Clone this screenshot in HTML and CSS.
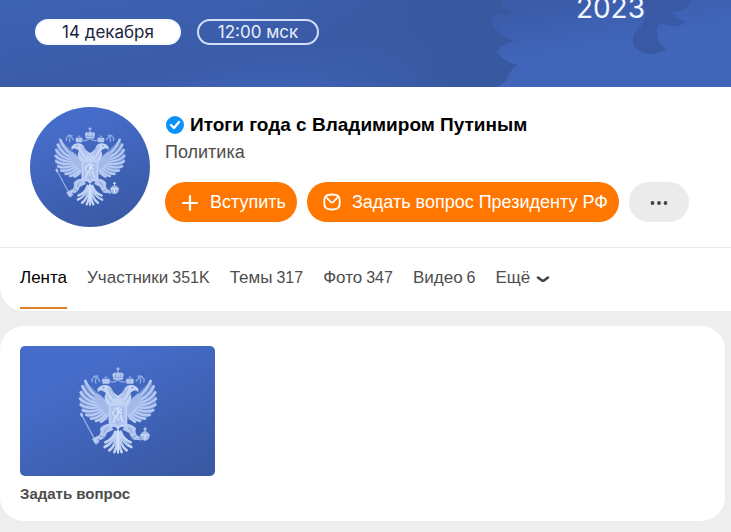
FILE: index.html
```html
<!DOCTYPE html>
<html lang="ru">
<head>
  <meta charset="UTF-8">
  <meta name="viewport" content="width=device-width, initial-scale=1.0">
  <title>Итоги года с Владимиром Путиным</title>
  <link rel="stylesheet" href="styles.css">
</head>
<body>

  <!-- Герб, используется в аватаре и в карточке -->
  <svg class="sprite" aria-hidden="true">
    <defs>
      <g id="half">
        <!-- крыло -->
        <path d="M22 42L8 76L5 113L24 146L54 162L92 158L96 120L62 80Z" fill="#7f9cdd" opacity=".7"/>
        <g fill="none" stroke="#b7caf1" stroke-width="8" stroke-linecap="round">
          <path d="M72 98Q38 82 22 42"/>
          <path d="M72 104Q30 96 13 58"/>
          <path d="M72 109Q26 108 8 76"/>
          <path d="M74 113Q28 119 6 95"/>
          <path d="M76 117Q32 130 8 113"/>
          <path d="M78 121Q40 140 14 130"/>
          <path d="M80 125Q52 148 25 144"/>
          <path d="M84 129Q64 154 39 155"/>
          <path d="M88 133Q74 158 54 162"/>
          <path d="M92 136Q84 158 69 164"/>
        </g>
        <g fill="none" stroke="#7f9cdd" stroke-width="1">
          <path d="M66 98Q38 82 24 50M62 106Q30 96 15 66M60 112Q28 108 11 84M60 118Q30 119 10 102M62 124Q36 132 14 120M66 130Q44 142 22 137M72 136Q56 150 34 150M78 142Q68 156 48 159"/>
        </g>
        <path d="M50 78Q74 82 94 116L94 146Q80 138 64 120Q48 100 50 78Z" fill="#a3b9e9"/>
        <!-- голова и шея -->
        <path d="M58 67Q64 56 78 54Q92 52 100 64Q105 78 120 86L120 112L92 116Q78 102 80 86Q86 80 80 75Q72 70 66 70L60 76Z" fill="#c3d4f5"/>
        <path d="M90 62Q96 80 108 96M86 84Q90 98 102 106M98 66Q102 80 116 94" fill="none" stroke="#7f9cdd" stroke-width="2"/>
        <circle cx="77" cy="62" r="2" fill="#4065bb"/>
        <!-- малая корона и лента -->
        <path d="M74 50L72 38Q78 32 84 37Q90 32 96 38L94 50Z" fill="#b4c8f0"/>
        <path d="M84 27V36M80 31H88M78 42H91" stroke="#a6bdeb" stroke-width="2"/>
        <path d="M66 44Q56 24 46 32Q38 38 44 46M62 28Q54 24 46 30M54 34Q50 44 54 50" fill="none" stroke="#91ace5" stroke-width="4"/>
        <!-- лапа -->
        <path d="M98 170Q76 170 66 184Q70 194 64 204L50 212L68 219Q84 212 86 198L106 188Z" fill="#b4c8f0"/>
        <path d="M90 182Q80 184 78 198M66 206L80 212" fill="none" stroke="#6787d0" stroke-width="2"/>
        <!-- хвост -->
        <g fill="none" stroke="#c3d4f5" stroke-width="8" stroke-linecap="round">
          <path d="M112 194Q104 218 82 226"/>
          <path d="M114 196Q108 228 80 240"/>
          <path d="M116 198Q114 236 94 250"/>
          <path d="M118 200Q120 236 109 255"/>
        </g>
        <path d="M108 212Q104 226 90 234M113 216Q110 234 96 244" fill="none" stroke="#7292d8" stroke-width="1"/>
      </g>
      <symbol id="eagle" viewBox="0 0 240 264">
        <use href="#half"/>
        <use href="#half" transform="translate(240 0) scale(-1 1)"/>
        <!-- большая корона -->
        <path d="M106 38L103 22Q108 14 116 18L120 14L124 18Q132 14 137 22L134 38Z" fill="#b4c8f0"/>
        <path d="M120 1V14M115 6H125" stroke="#c3d4f5" stroke-width="3"/>
        <path d="M106 31H134M113 20V30M127 20V30" stroke="#6f90d8" stroke-width="2"/>
        <path d="M96 44Q108 48 120 38Q132 48 144 44" fill="none" stroke="#91ace5" stroke-width="4"/>
        <!-- щит -->
        <path d="M92 110H148V174Q148 180 136 180H128L120 188L112 180H104Q92 180 92 174Z" fill="#b9cbf2"/>
        <path d="M96 114H144V174H127L120 181L113 174H96Z" fill="#afc3ee" stroke="#d8e3fa" stroke-width="2"/>
        <path d="M105 168L112 152L104 138L112 126L122 122L118 134L132 138L128 150L136 166M120 122V160M130 124L108 160" fill="none" stroke="#d8e3fa" stroke-width="4"/>
        <path d="M116 129L110 144M126 142L118 154M123 164L114 168M134 130V146" stroke="#8ca6e1" stroke-width="2"/>
        <path d="M120 190V257" stroke="#d3dff8" stroke-width="6" stroke-linecap="round"/>
        <!-- скипетр и держава -->
        <path d="M10 142L58 232" stroke="#91ace5" stroke-width="4"/>
        <path d="M5 140L12 136L16 147L10 150ZM42 216L56 208L65 224L52 232Z" fill="#b4c8f0"/>
        <path d="M164 214L190 218" stroke="#a6bdeb" stroke-width="5"/>
        <circle cx="201" cy="207" r="14" fill="#a6bdeb"/>
        <path d="M187 204H215M201 204V220M201 181V194M196 186H206" stroke="#d8e3fa" stroke-width="3"/>
      </symbol>
    </defs>
  </svg>

  <header class="group">
    <div class="cover">
      <svg class="cover-art" viewBox="0 0 731 87" preserveAspectRatio="xMaxYMin slice" aria-hidden="true">
        <defs>
          <linearGradient id="shade" x1="0" x2="1">
            <stop offset="0" stop-color="#3858a0" stop-opacity="0"/>
            <stop offset=".75" stop-color="#3858a0"/>
          </linearGradient>
        </defs>
        <path fill="url(#shade)" d="M260 0H502Q497 8 515 14Q497 13 491 18Q494 34 515 41Q502 43 497 52Q505 63 518 65Q509 70 507 80L498 87H260Z"/>
        <path fill="#3959a4" d="M642 0Q650 15 641 26Q630 35 634 46Q640 54 652 54Q662 53 666 49Q656 43 657 27L662 23Q674 30 686 22Q674 19 671 11Q684 14 692 0Z"/>
      </svg>
      <span class="pill pill-date">14 декабря</span>
      <span class="pill pill-time">12:00 мск</span>
      <span class="year">2023</span>
    </div>

    <div class="profile">
      <div class="avatar">
        <svg class="avatar-eagle" role="img" aria-label="Герб"><use href="#eagle"/></svg>
      </div>
      <div class="info">
        <h1 class="name">
          <svg class="verified" viewBox="0 0 18 18" aria-hidden="true">
            <circle cx="9" cy="9" r="9" fill="#0a91fa"/>
            <path d="M5 9L8 12L13 6" fill="none" stroke="#fff" stroke-width="2.4" stroke-linecap="round" stroke-linejoin="round"/>
          </svg>
          Итоги года с Владимиром Путиным
        </h1>
        <div class="category">Политика</div>
        <div class="actions">
          <button class="btn" type="button">
            <svg class="icon" viewBox="0 0 20 20" aria-hidden="true">
              <path d="M10 4V18M3 11H17" fill="none" stroke="#fff" stroke-width="2.2" stroke-linecap="round"/>
            </svg>
            Вступить
          </button>
          <button class="btn" type="button">
            <svg class="icon" viewBox="0 0 20 20" aria-hidden="true">
              <path d="M10 2.5C16 2.500 17.800 4.200 17.800 10S16 17.500 10 17.500S2.200 15.800 2.200 10S4 2.500 10 2.500Z" fill="none" stroke="#fff" stroke-width="1.8"/>
              <path d="M4 5L8.600 9.800Q10 11.200 11.400 9.800L16 5" fill="none" stroke="#fff" stroke-width="1.8" stroke-linecap="round"/>
            </svg>
            Задать вопрос Президенту РФ
          </button>
          <button class="btn btn-more" type="button" aria-label="Ещё действия">
            <svg class="icon" viewBox="0 0 20 20" aria-hidden="true">
              <g fill="#444"><circle cx="3.5" cy="11" r="1.9"/><circle cx="10" cy="11" r="1.9"/><circle cx="16.5" cy="11" r="1.9"/></g>
            </svg>
          </button>
        </div>
      </div>
    </div>

    <nav class="tabs">
      <a class="tab active" href="#">Лента</a>
      <a class="tab" href="#">Участники <span class="count">351K</span></a>
      <a class="tab" href="#">Темы <span class="count">317</span></a>
      <a class="tab" href="#">Фото <span class="count">347</span></a>
      <a class="tab" href="#">Видео <span class="count">6</span></a>
      <a class="tab" href="#">Ещё
        <svg class="chevron" viewBox="0 0 14 8" aria-hidden="true">
          <path d="M2 2.5L6 5.500Q7 6 8 5.500L12 2.500" fill="none" stroke="#444" stroke-width="2.6" stroke-linecap="round"/>
        </svg>
      </a>
    </nav>
  </header>

  <main class="block">
    <a class="card" href="#">
      <span class="card-cover">
        <svg class="card-eagle" aria-hidden="true"><use href="#eagle"/></svg>
      </span>
      <span class="card-title">Задать вопрос</span>
    </a>
  </main>

</body>
</html>
```
FILE: styles.css
```css
* {
  box-sizing: border-box;
}

body {
  margin: 0;
  background: #eee;
  color: #4d4d4d;
  font-family: "Liberation Sans", Arial, sans-serif;
  font-size: 18px;
}

a {
  color: inherit;
  text-decoration: none;
}

.sprite {
  position: absolute;
  width: 0;
  height: 0;
}

.group {
  background: #fff;
  border-bottom-left-radius: 24px;
}

/* обложка */
.cover {
  position: relative;
  display: flex;
  align-items: flex-start;
  gap: 16px;
  height: 87px;
  padding: 19px 86px 0 35px;
  overflow: hidden;
  background: linear-gradient(170deg, #3e63b3, #3b5ba8 45%, #4065b9 70%);
}

.cover-art {
  position: absolute;
  inset: 0;
  width: 100%;
  height: 100%;
}

.pill {
  position: relative;
  height: 26px;
  border: 2px solid #d3e1f8;
  border-radius: 13px;
  font-family: Inter, sans-serif;
  font-size: 17px;
  line-height: 22px;
  text-align: center;
}

.pill-date {
  width: 146px;
  border-color: #f4f8ff;
  background: #fff;
  color: #1b2340;
}

.pill-time {
  width: 122px;
  color: #e6effc;
}

.year {
  position: relative;
  margin: -28px 0 0 auto;
  color: #f1f6ff;
  font-family: Inter, sans-serif;
  font-size: 28px;
  line-height: 34px;
}

/* шапка группы */
.profile {
  display: flex;
  gap: 15px;
  padding: 20px 30px;
  border-bottom: 1px solid #e8e8e8;
}

.avatar {
  display: flex;
  align-items: center;
  justify-content: center;
  flex: none;
  width: 120px;
  height: 120px;
  border-radius: 50%;
  background: linear-gradient(160deg, #456cc9 20%, #3957a0);
}

.avatar-eagle {
  width: 74px;
  height: 80px;
}

.name {
  display: flex;
  align-items: center;
  gap: 6px;
  margin: 5px 0 0 1px;
  color: #000;
  font-size: 19px;
  line-height: 26px;
}

.verified {
  flex: none;
  width: 18px;
  height: 18px;
}

.category {
  margin-top: 3px;
  line-height: 22px;
}

.actions {
  display: flex;
  gap: 10px;
  margin-top: 19px;
}

.btn {
  display: flex;
  align-items: center;
  justify-content: center;
  gap: 10px;
  height: 40px;
  padding: 0 11px 0 15px;
  border: 0;
  border-radius: 20px;
  background: #ff7700;
  color: #fff;
  font: inherit;
  white-space: nowrap;
  cursor: pointer;
}

.btn-more {
  width: 60px;
  padding: 0;
  background: #ebebeb;
}

.icon {
  flex: none;
  width: 20px;
  height: 20px;
}

/* вкладки */
.tabs {
  display: flex;
  gap: 20px;
  padding: 0 20px 2px;
}

.tab {
  display: flex;
  align-items: baseline;
  gap: 4px;
  padding: 18px 0 17px;
  border-bottom: 2px solid transparent;
  font-size: 17px;
  line-height: 24px;
  white-space: nowrap;
}

.tab.active {
  border-color: #e08026;
  color: #000;
}

.count {
  font-size: 16px;
}

.chevron {
  width: 14px;
  height: 8px;
  margin-left: 2px;
}

/* лента */
.block {
  margin: 15px 6px 11px 0;
  padding: 20px 20px 17px;
  border-radius: 24px;
  background: #fff;
}

.card {
  display: inline-block;
  vertical-align: top;
}

.card-cover {
  display: flex;
  align-items: center;
  justify-content: center;
  width: 195px;
  height: 130px;
  border-radius: 5px;
  background: linear-gradient(155deg, #456cc9 25%, #3957a0);
}

.card-eagle {
  width: 80px;
  height: 88px;
}

.card-title {
  display: block;
  margin-top: 8px;
  font-size: 15px;
  font-weight: bold;
  line-height: 20px;
}
```
